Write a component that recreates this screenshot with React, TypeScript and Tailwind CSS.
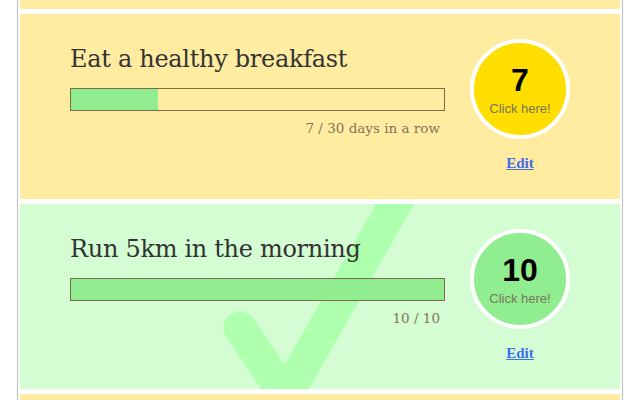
import React from "react";

type Habit = {
  title: string;
  count: number;
  goal: number;
  label: string;
  done: boolean;
};

const habits: Habit[] = [
  { title: "Drink eight glasses of water", count: 3, goal: 14, label: "3 / 14 days in a row", done: false },
  { title: "Eat a healthy breakfast", count: 7, goal: 30, label: "7 / 30 days in a row", done: false },
  { title: "Run 5km in the morning", count: 10, goal: 10, label: "10 / 10", done: true },
  { title: "Read for thirty minutes", count: 2, goal: 20, label: "2 / 20 days in a row", done: false },
];

function Check() {
  return (
    <svg
      className="absolute left-0 top-0 pointer-events-none"
      width="600"
      height="185"
      viewBox="0 0 600 185"
    >
      <path
        d="M220 124 L266 192 L392 -30"
        fill="none"
        stroke="#aeffae"
        strokeWidth="33"
        strokeLinecap="round"
        strokeLinejoin="miter"
      />
    </svg>
  );
}

function Card({ h }: { h: Habit }) {
  const pct = Math.min(100, (h.count / h.goal) * 100);
  return (
    <div
      className={`relative overflow-hidden h-[185px] flex px-[50px] gap-[25px] ${
        h.done ? "bg-[#d4fdd4]" : "bg-[#ffeca1]"
      }`}
    >
      {h.done && <Check />}
      <div className="relative flex-1 pt-[30px]">
        <div
          className="text-[24px] leading-[30px] tracking-[-0.3px] text-[#333333] whitespace-nowrap"
          style={{ fontFamily: '"DejaVu Serif", serif' }}
        >
          {h.title}
        </div>
        <div className="mt-[14px] h-[23px] border border-[#7d6b4e]">
          <div className="h-full bg-[#90ee90]" style={{ width: `${pct}%` }} />
        </div>
        <div
          className="mt-[8px] pr-[5px] text-right text-[13.5px] leading-[18px] text-[#857556]"
          style={{ fontFamily: '"DejaVu Serif", serif' }}
        >
          {h.label}
        </div>
      </div>
      <div className="relative w-[100px] pt-[25px] flex flex-col items-center">
        <button
          className={`w-[100px] h-[100px] rounded-full border-4 border-white flex flex-col items-center ${
            h.done ? "bg-[#90ee90]" : "bg-[#ffde00]"
          }`}
          style={{ fontFamily: '"Liberation Sans", Arial, sans-serif' }}
        >
          <span className="mt-[19px] text-[32px] leading-[36px] font-bold text-black">{h.count}</span>
          <span className="mt-[3px] text-[13px] leading-[16px] text-[#77755f]">Click here!</span>
        </button>
        <a
          href="#"
          className="mt-[15px] text-[15px] leading-[18px] font-bold text-[#3f6ef0] underline"
          style={{ fontFamily: '"Liberation Serif", serif' }}
        >
          Edit
        </a>
      </div>
    </div>
  );
}

export default function App() {
  return (
    <div className="h-[400px] overflow-hidden bg-white">
      <div className="w-[606px] mx-auto border-x border-[#bdbdbd] px-[2px] min-h-[400px]">
        <div className="-mt-[176px] flex flex-col gap-[5px]">
          {habits.map((h) => (
            <Card key={h.title} h={h} />
          ))}
        </div>
      </div>
    </div>
  );
}
